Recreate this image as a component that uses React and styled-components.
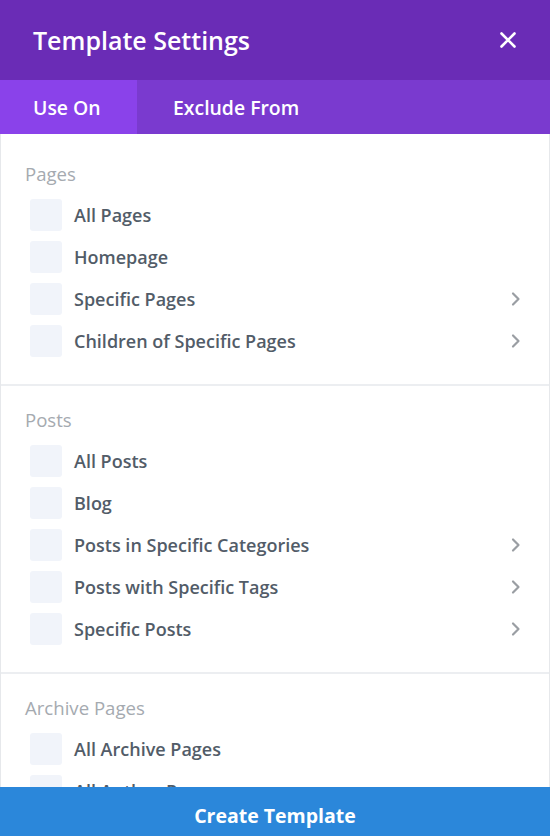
import React from 'react';
import styled, { createGlobalStyle } from 'styled-components';

const GlobalStyle = createGlobalStyle`
  html, body {
    margin: 0;
    padding: 0;
    background: #ffffff;
  }
  body {
    font-family: 'Open Sans', 'Noto Sans', sans-serif;
  }
`;

const Modal = styled.div`
  width: 550px;
  height: 836px;
  display: flex;
  flex-direction: column;
  overflow: hidden;
  background: #fff;
`;

const Header = styled.div`
  height: 80px;
  flex: none;
  display: flex;
  align-items: center;
  justify-content: space-between;
  padding: 0 30px 0 33px;
  background: #6a2cb6;
  color: #fff;
`;

const Title = styled.h1`
  margin: 0;
  font-size: 25px;
  font-weight: 600;
`;

const CloseButton = styled.button`
  border: 0;
  background: none;
  padding: 0;
  width: 24px;
  height: 24px;
  display: flex;
  align-items: center;
  justify-content: center;
  color: #fff;
  cursor: pointer;
`;

const Tabs = styled.div`
  height: 54px;
  flex: none;
  display: flex;
  background: #7a3acf;
`;

const Tab = styled.div`
  display: flex;
  align-items: center;
  padding: 1px 30px 0 ${({ active }) => (active ? '33px' : '36px')};
  width: ${({ active }) => (active ? '137px' : 'auto')};
  box-sizing: border-box;
  background: ${({ active }) => (active ? '#8a42ea' : 'transparent')};
  color: #fff;
  font-size: 19.4px;
  font-weight: 600;
`;

const Body = styled.div`
  flex: 1;
  overflow: hidden;
  padding-top: 6px;
  border-left: 1px solid #e6e8eb;
  border-right: 1px solid #e6e8eb;
`;

const Section = styled.section`
  padding: 24px 0 22px 24px;
  border-bottom: 2px solid #eceef1;
`;

const SectionLabel = styled.div`
  height: 20px;
  line-height: 20px;
  margin-bottom: 10px;
  font-size: 18.6px;
  font-weight: 500;
  color: #a5aab0;
`;

const Row = styled.div`
  height: 42px;
  display: flex;
  align-items: center;
  padding: 0 27px 0 5px;
`;

const Check = styled.span`
  width: 32px;
  height: 32px;
  flex: none;
  border-radius: 3px;
  background: #f1f4fa;
`;

const RowText = styled.span`
  flex: 1;
  margin-left: 12px;
  font-size: 18px;
  font-weight: 600;
  color: #525c68;
  white-space: nowrap;
`;

const Chevron = () => (
  <svg width="12" height="16" viewBox="0 0 12 16">
    <path d="M3 2.5 L8.5 8 L3 13.5" fill="none" stroke="#9a9ea3" strokeWidth="2.2" strokeLinecap="round" strokeLinejoin="round" />
  </svg>
);

const Footer = styled.button`
  height: 49px;
  flex: none;
  border: 0;
  width: 100%;
  padding: 8px 0 0;
  background: #2b87da;
  color: #fff;
  font-family: 'Open Sans', 'Noto Sans', sans-serif;
  font-size: 19.5px;
  font-weight: 700;
  cursor: pointer;
`;

const sections = [
  {
    label: 'Pages',
    items: [
      ['All Pages'],
      ['Homepage'],
      ['Specific Pages', true],
      ['Children of Specific Pages', true],
    ],
  },
  {
    label: 'Posts',
    items: [
      ['All Posts'],
      ['Blog'],
      ['Posts in Specific Categories', true],
      ['Posts with Specific Tags', true],
      ['Specific Posts', true],
    ],
  },
  {
    label: 'Archive Pages',
    items: [['All Archive Pages'], ['All Author Pages'], ['All Category Pages']],
  },
];

const App = () => (
  <Modal>
    <GlobalStyle />
    <Header>
      <Title>Template Settings</Title>
      <CloseButton aria-label="Close">
        <svg width="18" height="18" viewBox="0 0 18 18">
          <path d="M2.5 2.5 L15.5 15.5 M15.5 2.5 L2.5 15.5" stroke="#fff" strokeWidth="2.6" strokeLinecap="round" />
        </svg>
      </CloseButton>
    </Header>
    <Tabs>
      <Tab active>Use On</Tab>
      <Tab>Exclude From</Tab>
    </Tabs>
    <Body>
      {sections.map((s) => (
        <Section key={s.label}>
          <SectionLabel>{s.label}</SectionLabel>
          {s.items.map(([text, more]) => (
            <Row key={text}>
              <Check />
              <RowText>{text}</RowText>
              {more && <Chevron />}
            </Row>
          ))}
        </Section>
      ))}
    </Body>
    <Footer>Create Template</Footer>
  </Modal>
);

export default App;
